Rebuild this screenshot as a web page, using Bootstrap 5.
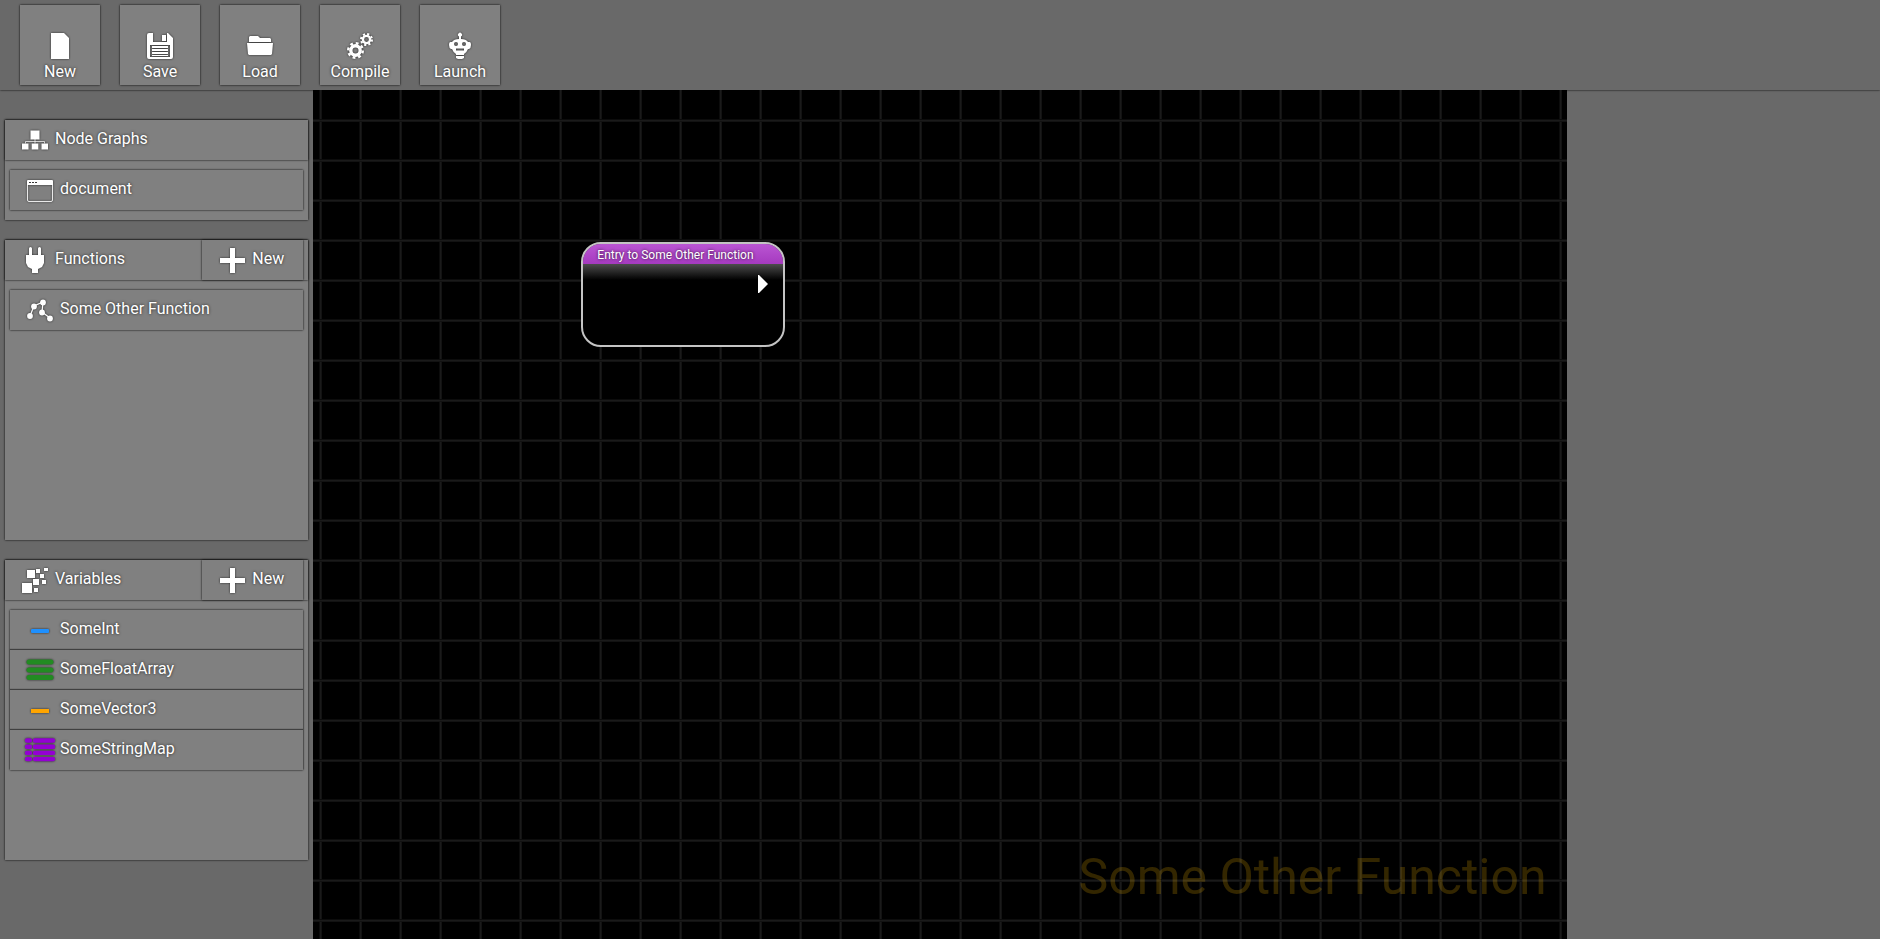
<!DOCTYPE html>
<html lang="en">
<head>
<meta charset="utf-8">
<meta name="viewport" content="width=device-width, initial-scale=1">
<title>Node Graph Editor</title>
<link href="https://cdn.jsdelivr.net/npm/bootstrap@5.3.0/dist/css/bootstrap.min.css" rel="stylesheet">
<style>
  body { background: #696969; color: #fff; font-family: Roboto, sans-serif; font-size: 16px; line-height: 20px; text-shadow: 0 0 3px rgba(0,0,0,.8); }
  svg { filter: drop-shadow(0 0 1px rgba(0,0,0,.7)); overflow: visible; display: block; fill: #fff; flex: none; }
  .toolbar { height: 90px; padding: 5px 20px; gap: 20px; box-shadow: 0 0 2px #000; }
  .tool { width: 80px; height: 80px; padding: 0 0 3px; gap: 3px; }
  .tool, .add { color: #fff; background: #808080; border: 0; border-radius: 0; font-size: 16px; line-height: 20px; text-shadow: inherit; box-shadow: 0 0 2px #000; }
  .tool:hover, .add:hover { color: #fff; background: #8c8c8c; }
  .side { padding: 30px 5px 20px; gap: 20px; }
  .panel { background: #808080; box-shadow: 0 0 2px #000; }
  .panel-tall { height: 300px; }
  .panel-head { height: 40px; padding: 0 5px 0 17px; gap: 7px; box-shadow: 0 0 2px #000; }
  .panel-head h2 { font-size: 16px; line-height: 20px; font-weight: 400; }
  .panel-body { padding: 10px 5px; }
  .add { width: 101px; height: 40px; padding: 0 0 0 18px; gap: 7px; }
  .items { box-shadow: 0 0 2px #000; }
  .items a { height: 40px; padding: 0 17px; gap: 7px; color: #fff; text-decoration: none; }
  .items svg { margin-top: 2px; }
  .items li + li { box-shadow: 0 -1px 1px rgba(0,0,0,.5); }
  .raise { padding-bottom: 2px; }
  .board { background-color: #000; background-image: linear-gradient(#0c0c0c 1px, #1a1a1a 1px 2px, #121212 2px 3px, transparent 3px), linear-gradient(90deg, #0c0c0c 1px, #1a1a1a 1px 2px, #121212 2px 3px, transparent 3px); background-size: 40px 40px; background-position: 6px 29px; }
  .node { left: 268px; top: 152px; width: 204px; height: 105px; border: 2px solid #c4c4c4; border-radius: 20px; background: linear-gradient(#4d4d4d 20px, #000 36px); overflow: hidden; }
  .node-title { height: 20px; padding-left: 14px; font-size: 12px; line-height: 22px; background: linear-gradient(#ba55d3, #a53abf); }
  .pin { right: 15px; top: 31px; }
  .watermark { right: 20px; bottom: 32px; font-size: 50px; line-height: 60px; color: rgba(255,191,0,.2); text-shadow: none; }
</style>
</head>
<body class="vh-100 d-flex flex-column overflow-hidden">
<svg width="0" height="0" class="position-absolute" aria-hidden="true">
  <symbol id="plus" viewBox="0 0 25 25"><path d="M10 0h5v10h10v5H15v10h-5V15H0v-5h10z"/></symbol>
</svg>
<header class="toolbar d-flex flex-shrink-0">
  <button type="button" class="btn tool d-flex flex-column align-items-center justify-content-end">
    <svg width="26" height="26" viewBox="0 0 26 26"><path d="M4 0h13l5 5v21H4z"/></svg>
    <span>New</span></button>
  <button type="button" class="btn tool d-flex flex-column align-items-center justify-content-end">
    <svg width="26" height="26" viewBox="0 0 26 26"><path fill-rule="evenodd" d="M2 0h4v9h14V0h1l5 5v19q0 2-2 2H2q-2 0-2-2V2q0-2 2-2zM15 2h4v6h-4zM3 12v12h20V12zM5 13h16v2H5zm0 3h16v2H5zm0 3h16v2H5zm0 3h16v1H5z"/></svg>
    <span>Save</span></button>
  <button type="button" class="btn tool d-flex flex-column align-items-center justify-content-end">
    <svg width="26" height="26" viewBox="0 0 26 26"><path d="M2 9V4l1-1h8l2 2h10l1 1v3zM0 10h26l-1 11-1 1H2l-1-1z"/></svg>
    <span>Load</span></button>
  <button type="button" class="btn tool d-flex flex-column align-items-center justify-content-end">
    <svg width="26" height="26" viewBox="0 0 26 26">
      <g fill="none" stroke="#fff"><circle cx="8.500" cy="17.500" r="4.700" stroke-width="3.400"/><circle cx="8.500" cy="17.500" r="7.300" stroke-width="2.400" stroke-dasharray="2.870 2.863"/>
      <circle cx="19.500" cy="6.500" r="3.600" stroke-width="2.400"/><circle cx="19.500" cy="6.500" r="5.500" stroke-width="2" stroke-dasharray="2.160 2.160"/></g></svg>
    <span>Compile</span></button>
  <button type="button" class="btn tool d-flex flex-column align-items-center justify-content-end">
    <svg width="26" height="26" viewBox="0 0 26 26"><path fill-rule="evenodd" d="M12 3.500a2 2 0 1 1 2 0V6q5 0 7 3h1.500q1.500 0 1.500 3t-2 4h-1q-1 3-4 5v1H9v-1q-3-2-4-5H4q-2-1-2-4t1.500-3H5q2-3 7-3zM9 9a2 2 0 1 0 0 4 2 2 0 0 0 0-4zm8 0a2 2 0 1 0 0 4 2 2 0 0 0 0-4zM9 15.500v2h8v-2zM9 23h8v2l-2 1h-4l-2-1z"/></svg>
    <span>Launch</span></button>
</header>
<div class="row g-0 flex-fill">
  <nav class="col-2 side d-flex flex-column">
    <section class="panel">
      <div class="panel-head d-flex align-items-center">
        <svg width="26" height="26" viewBox="0 0 26 26"><path d="M8.500 3.500h9v9h-9zM0 16.500h6.500v6H0zM9.700 16.500h6.600v6H9.700zM19.500 16.500H26v6h-6.500z"/><path d="M13 12v4.500M3.500 16.500v-2h19v2" fill="none" stroke="#fff" stroke-opacity=".7"/></svg>
        <h2 class="mb-0 raise">Node Graphs</h2>
      </div>
      <div class="panel-body"><ul class="items list-unstyled mb-0">
        <li><a href="#document" class="d-flex align-items-center">
          <svg width="26" height="26" viewBox="0 0 26 26"><path fill-rule="evenodd" d="M1 2h24q1 0 1 1v4H0V3q0-1 1-1zM2 4v1h2V4zm3 0v1h2V4zm3 0v1h2V4z"/><path d="M.5 7v15q0 1.500 1.500 1.500h22q1.500 0 1.500-1.500V7" fill="none" stroke="#fff" stroke-opacity=".85"/></svg>
          <span class="raise">document</span></a></li>
      </ul></div>
    </section>
    <section class="panel panel-tall">
      <div class="panel-head d-flex align-items-center">
        <svg width="26" height="26" viewBox="0 0 26 26"><path d="M7 1.500Q7 0 8.500 0T10 1.500V8h6V1.500Q16 0 17.500 0T19 1.500V8h3v8l-2 4-4 2v4h-6v-4l-4-2-2-4V8h3z"/></svg>
        <h2 class="mb-0 me-auto raise">Functions</h2>
        <button type="button" class="btn add d-flex align-items-center"><svg width="25" height="25"><use href="#plus"/></svg><span class="raise">New</span></button>
      </div>
      <div class="panel-body"><ul class="items list-unstyled mb-0">
        <li><a href="#function" class="d-flex align-items-center">
          <svg width="26" height="26" viewBox="0 0 26 26"><path d="M3 18 7 8l9-4-1 10 8 6" fill="none" stroke="#fff" stroke-width="1.200"/><circle cx="3" cy="18" r="2.900"/><circle cx="7" cy="8.500" r="2.900"/><circle cx="16" cy="4.500" r="2.900"/><circle cx="15" cy="14.500" r="2.900"/><circle cx="23" cy="20.500" r="2.900"/></svg>
          <span class="raise">Some Other Function</span></a></li>
      </ul></div>
    </section>
    <section class="panel panel-tall">
      <div class="panel-head d-flex align-items-center">
        <svg width="26" height="26" viewBox="0 0 26 26"><path d="M0 16h10v10H0zM5 3h8v8H5zM11 12h6v6h-6zM14 2h4v4h-4zM22 1h4v3h-4zM18 7h4v4h-4zM20 13h4v4h-4zM12 21h4v4h-4z"/></svg>
        <h2 class="mb-0 me-auto raise">Variables</h2>
        <button type="button" class="btn add d-flex align-items-center"><svg width="25" height="25"><use href="#plus"/></svg><span class="raise">New</span></button>
      </div>
      <div class="panel-body"><ul class="items list-unstyled mb-0">
        <li><a href="#int" class="d-flex align-items-center">
          <svg width="26" height="26" viewBox="0 0 26 26"><rect x="4" y="11" width="18" height="4" rx="1" fill="#1e90ff"/></svg>
          <span class="raise">SomeInt</span></a></li>
        <li><a href="#array" class="d-flex align-items-center">
          <svg width="26" height="26" viewBox="0 0 26 26"><path d="M2 4h22M2 12h22M2 19.500h22" fill="none" stroke="#228b22" stroke-width="5" stroke-linecap="round"/></svg>
          <span class="raise">SomeFloatArray</span></a></li>
        <li><a href="#vector" class="d-flex align-items-center">
          <svg width="26" height="26" viewBox="0 0 26 26"><rect x="4" y="11" width="18" height="4" fill="#ffa500"/></svg>
          <span class="raise">SomeVector3</span></a></li>
        <li><a href="#map" class="d-flex align-items-center">
          <svg width="26" height="26" viewBox="0 0 26 26"><path d="M0 2.500h3m5 0h18M0 8.700h3m5 0h18M0 14.900h3m5 0h18M0 21.100h3m5 0h18" fill="none" stroke="#9400d3" stroke-width="4.400" stroke-linecap="round"/></svg>
          <span class="raise">SomeStringMap</span></a></li>
      </ul></div>
    </section>
  </nav>
  <main class="col-8 board position-relative overflow-hidden">
    <div class="watermark position-absolute">Some Other Function</div>
    <div class="node position-absolute">
      <div class="node-title">Entry to Some Other Function</div>
      <svg class="pin position-absolute" width="10" height="18" viewBox="0 0 10 18"><path d="M0 0h1l9 9-9 9H0z"/></svg>
    </div>
  </main>
  <aside class="col-2"></aside>
</div>
<script src="https://cdn.jsdelivr.net/npm/bootstrap@5.3.0/dist/js/bootstrap.bundle.min.js"></script>
</body>
</html>
